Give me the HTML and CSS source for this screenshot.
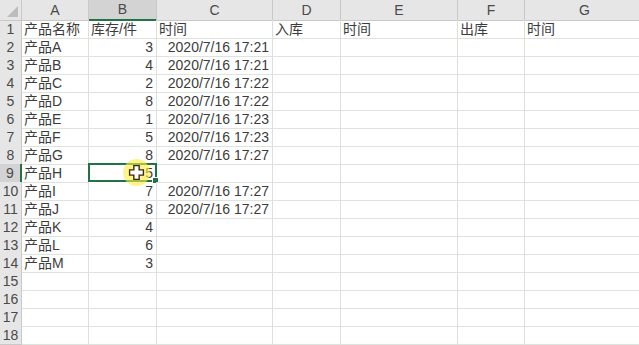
FILE: index.html
```html
<!DOCTYPE html>
<html lang="zh">
<head>
    <meta charset="UTF-8">
    <title>库存表</title>
    <link rel="stylesheet" href="styles.css">
</head>
<body>
    <div class="sheet">
        <div class="row head">
            <div class="corner"><span class="tri"></span></div>
            <div class="col">A</div>
            <div class="col active">B</div>
            <div class="col">C</div>
            <div class="col">D</div>
            <div class="col">E</div>
            <div class="col">F</div>
            <div class="col">G</div>
        </div>
        <div class="row"><div class="num">1</div><div class="cell">产品名称</div><div class="cell">库存/件</div><div class="cell">时间</div><div class="cell">入库</div><div class="cell">时间</div><div class="cell">出库</div><div class="cell">时间</div></div>
        <div class="row"><div class="num">2</div><div class="cell">产品A</div><div class="cell r">3</div><div class="cell r">2020/7/16 17:21</div><div class="cell"></div><div class="cell"></div><div class="cell"></div><div class="cell"></div></div>
        <div class="row"><div class="num">3</div><div class="cell">产品B</div><div class="cell r">4</div><div class="cell r">2020/7/16 17:21</div><div class="cell"></div><div class="cell"></div><div class="cell"></div><div class="cell"></div></div>
        <div class="row"><div class="num">4</div><div class="cell">产品C</div><div class="cell r">2</div><div class="cell r">2020/7/16 17:22</div><div class="cell"></div><div class="cell"></div><div class="cell"></div><div class="cell"></div></div>
        <div class="row"><div class="num">5</div><div class="cell">产品D</div><div class="cell r">8</div><div class="cell r">2020/7/16 17:22</div><div class="cell"></div><div class="cell"></div><div class="cell"></div><div class="cell"></div></div>
        <div class="row"><div class="num">6</div><div class="cell">产品E</div><div class="cell r">1</div><div class="cell r">2020/7/16 17:23</div><div class="cell"></div><div class="cell"></div><div class="cell"></div><div class="cell"></div></div>
        <div class="row"><div class="num">7</div><div class="cell">产品F</div><div class="cell r">5</div><div class="cell r">2020/7/16 17:23</div><div class="cell"></div><div class="cell"></div><div class="cell"></div><div class="cell"></div></div>
        <div class="row"><div class="num">8</div><div class="cell">产品G</div><div class="cell r">8</div><div class="cell r">2020/7/16 17:27</div><div class="cell"></div><div class="cell"></div><div class="cell"></div><div class="cell"></div></div>
        <div class="row"><div class="num active">9</div><div class="cell">产品H</div><div class="cell r selected">5<span class="handle"></span></div><div class="cell"></div><div class="cell"></div><div class="cell"></div><div class="cell"></div><div class="cell"></div></div>
        <div class="row"><div class="num">10</div><div class="cell">产品I</div><div class="cell r">7</div><div class="cell r">2020/7/16 17:27</div><div class="cell"></div><div class="cell"></div><div class="cell"></div><div class="cell"></div></div>
        <div class="row"><div class="num">11</div><div class="cell">产品J</div><div class="cell r">8</div><div class="cell r">2020/7/16 17:27</div><div class="cell"></div><div class="cell"></div><div class="cell"></div><div class="cell"></div></div>
        <div class="row"><div class="num">12</div><div class="cell">产品K</div><div class="cell r">4</div><div class="cell"></div><div class="cell"></div><div class="cell"></div><div class="cell"></div><div class="cell"></div></div>
        <div class="row"><div class="num">13</div><div class="cell">产品L</div><div class="cell r">6</div><div class="cell"></div><div class="cell"></div><div class="cell"></div><div class="cell"></div><div class="cell"></div></div>
        <div class="row"><div class="num">14</div><div class="cell">产品M</div><div class="cell r">3</div><div class="cell"></div><div class="cell"></div><div class="cell"></div><div class="cell"></div><div class="cell"></div></div>
        <div class="row"><div class="num">15</div><div class="cell"></div><div class="cell"></div><div class="cell"></div><div class="cell"></div><div class="cell"></div><div class="cell"></div><div class="cell"></div></div>
        <div class="row"><div class="num">16</div><div class="cell"></div><div class="cell"></div><div class="cell"></div><div class="cell"></div><div class="cell"></div><div class="cell"></div><div class="cell"></div></div>
        <div class="row"><div class="num">17</div><div class="cell"></div><div class="cell"></div><div class="cell"></div><div class="cell"></div><div class="cell"></div><div class="cell"></div><div class="cell"></div></div>
        <div class="row"><div class="num">18</div><div class="cell"></div><div class="cell"></div><div class="cell"></div><div class="cell"></div><div class="cell"></div><div class="cell"></div><div class="cell"></div></div>

        <!-- mouse pointer with click highlight -->
        <div class="pointer">
            <svg width="17" height="17" viewBox="0 0 16 16">
                <path d="M5.5 1.5h5v4h4v5h-4v4h-5v-4h-4v-5h4z" fill="#fff" stroke="#3a2a10" stroke-width="1.3"/>
            </svg>
        </div>
    </div>
</body>
</html>
```

FILE: styles.css
```css
body {
    margin: 0;
    overflow: hidden;
    background: #fff;
    font-family: "Liberation Sans", "Noto Sans CJK SC", sans-serif;
    font-size: 14px;
    color: #3c3c3c;
}
.sheet {
    position: relative;
    width: 639px;
    height: 345px;
    overflow: hidden;
}
.row {
    display: grid;
    grid-template-columns: 22px 67px 68px 116px 68px 117px 67px 120px;
    height: 18px;
}
.row.head {
    height: 20px;
}
.corner, .col, .num {
    box-sizing: border-box;
    background: #e6e6e6;
    color: #4a4a4a;
    border-right: 1px solid #c9c9c9;
    border-bottom: 1px solid #c9c9c9;
}
.corner {
    position: relative;
}
.tri {
    position: absolute;
    right: 3px;
    bottom: 3px;
    width: 0;
    height: 0;
    border-left: 11px solid transparent;
    border-bottom: 11px solid #bcbcbc;
}
.col {
    text-align: center;
    line-height: 20px;
}
.col.active {
    background: #d3d3d3;
    border-bottom: 2px solid #217346;
    line-height: 19px;
}
.num {
    text-align: center;
    line-height: 18px;
    font-size: 14px;
}
.num.active {
    background: #d3d3d3;
    border-right: 2px solid #217346;
}
.cell {
    box-sizing: border-box;
    position: relative;
    border-right: 1px solid #dcdfdc;
    border-bottom: 1px solid #dde3dd;
    line-height: 18px;
    padding: 0 2px;
    white-space: nowrap;
}
.cell.r {
    text-align: right;
    padding-right: 3px;
}
.cell.selected {
    border: 2px solid #217346;
    margin: -1px 0 0 -1px;
    height: 19px;
    width: 69px;
    line-height: 16px;
    padding-right: 2px;
}
.handle {
    position: absolute;
    right: -4px;
    bottom: -4px;
    width: 5px;
    height: 5px;
    background: #217346;
    border: 1px solid #fff;
}
.pointer {
    position: absolute;
    left: 123px;
    top: 159px;
    width: 27px;
    height: 27px;
    border-radius: 50%;
    background: rgba(255, 236, 60, 0.6);
    display: flex;
    align-items: center;
    justify-content: center;
}
```
